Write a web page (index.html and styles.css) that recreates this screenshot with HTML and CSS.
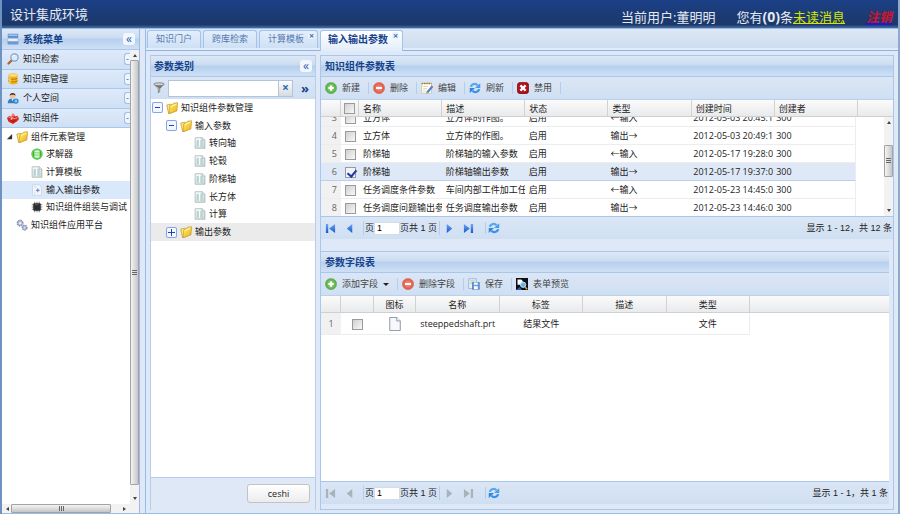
FILE: index.html
```html
<!DOCTYPE html>
<html lang="zh-CN">
<head>
  <meta charset="UTF-8">
  <meta name="viewport" content="width=device-width, initial-scale=1.0">
  <title>设计集成环境</title>
  <link rel="stylesheet" href="styles.css">
</head>
<body>

  <!-- icon sprite -->
  <svg class="sprite" aria-hidden="true">
    <defs>
      <linearGradient id="g-yellow" x1="0" y1="0" x2="1" y2="1"><stop offset="0" stop-color="#fff27a"/><stop offset="1" stop-color="#e8ae10"/></linearGradient>
      <linearGradient id="g-blue" x1="0" y1="0" x2="0" y2="1"><stop offset="0" stop-color="#6aa5f5"/><stop offset="1" stop-color="#1c55d0"/></linearGradient>
      <linearGradient id="g-page" x1="0" y1="0" x2="1" y2="1"><stop offset="0" stop-color="#ffffff"/><stop offset="1" stop-color="#c4d4d4"/></linearGradient>
      <radialGradient id="g-green"><stop offset="0" stop-color="#a8e68c"/><stop offset="1" stop-color="#4fa640"/></radialGradient>
      <radialGradient id="g-red"><stop offset="0" stop-color="#f79a88"/><stop offset="1" stop-color="#e0523f"/></radialGradient>
    </defs>
    <symbol id="i-menu" viewBox="0 0 16 16"><rect x="1" y="1" width="14" height="6" rx="1" fill="#5b8fd2"/><rect x="2" y="2" width="12" height="2" fill="#a5c6ef"/><rect x="1" y="7" width="14" height="8" rx="1" fill="#e6f0fb" stroke="#8fb3dc"/><path d="M1 11h14v4H1z" fill="#6f98cf"/></symbol>
    <symbol id="i-search" viewBox="0 0 16 16"><path d="M6.500 9.500L2 14" stroke="#b5652c" stroke-width="3" stroke-linecap="round"/><circle cx="10" cy="6" r="4.800" fill="#d9ecfc" stroke="#7f9fc8" stroke-width="1.600"/><path d="M7 5q1-2 3-2" stroke="#fff" stroke-width="1.500" fill="none"/></symbol>
    <symbol id="i-db" viewBox="0 0 16 16"><path d="M2 3v10c0 3 12 3 12 0V3z" fill="#f2b41c"/><path d="M2 6.500c0 2.500 12 2.500 12 0M2 10c0 2.500 12 2.500 12 0" fill="none" stroke="#b77707" stroke-width="1.300"/><ellipse cx="8" cy="3.200" rx="6" ry="2.200" fill="#ffe27a" stroke="#d99a12" stroke-width=".6"/><path d="M4 6v8" stroke="#ffe58a" stroke-width="1.500"/></symbol>
    <symbol id="i-user" viewBox="0 0 16 16"><path d="M1 15c0-5 3-6.500 6-6.500s6 1.500 6 6.500z" fill="#3d7fb5"/><circle cx="7.500" cy="5" r="3.700" fill="#f0c49a"/><path d="M3.700 5C3 0 12 0 11.300 5 10 3.500 5.500 3 3.700 5z" fill="#4b3425"/><path d="M6 9l1.500 3L9 9z" fill="#fff"/><circle cx="12" cy="12" r="3.500" fill="#2a8bd8"/><path d="M12 10v4M10.500 12h3" stroke="#d9efff" stroke-width="1"/></symbol>
    <symbol id="i-kit" viewBox="0 0 16 16"><path d="M0 8l3-3 3 1 2-4 3 4 3-1 2 4-2 3-6 4-6-3z" fill="#d8281e"/><path d="M2 7q3-2 6 1t6-1" stroke="#ffb4a8" stroke-width="1.200" fill="none"/><path d="M5 11l3 2 4-3" stroke="#8b0d0a" fill="none"/><circle cx="8" cy="4" r="2" fill="#ef8076"/><circle cx="6" cy="9" r="1.200" fill="#fff" opacity=".8"/></symbol>
    <symbol id="i-folder" viewBox="0 0 16 16"><path d="M1 4l5-1 2 1 .5 10-5 1.500z" fill="#ffe97c" stroke="#b98411" stroke-width=".8"/><path d="M5 5l4-2 1-1.500 5.500-.5-1 11L4 15.500z" fill="url(#g-yellow)" stroke="#c48f14" stroke-width=".8"/><path d="M6.500 6l7.500-3" stroke="#fffbd0" stroke-width="1.200"/></symbol>
    <symbol id="i-solver" viewBox="0 0 16 16"><circle cx="8" cy="8" r="7.500" fill="#39b82d"/><circle cx="8" cy="8" r="6.500" fill="none" stroke="#91e481" stroke-width=".8"/><path d="M4.500 4v8c0 1.500 7 1.500 7 0V4c0-1.500-7-1.500-7 0z" fill="#dcf8d4"/><path d="M4.500 6.500h7M4.500 9.500h7" stroke="#5dc94f"/></symbol>
    <symbol id="i-doc" viewBox="0 0 16 16"><path d="M1.500 1H11l3.500 3v11h-13z" fill="url(#g-page)" stroke="#9db3b3"/><path d="M3.500 4h3v9h-3zM8.500 4h3v9h-3z" fill="#b9d3d3"/><path d="M7.500 2v11" stroke="#fff" stroke-width="1.200"/><path d="M11 1v3h3.500" fill="#fff" stroke="#9db3b3"/></symbol>
    <symbol id="i-param" viewBox="0 0 16 16"><path d="M2 1h9l3 3v11H2z" fill="#f3f6fa" stroke="#c5d1e2"/><path d="M9 6v5M6.500 8.500h5" stroke="#7d86cf" stroke-width="1.500"/><path d="M4 4h3M4 12h2" stroke="#b9cbe5"/></symbol>
    <symbol id="i-chip" viewBox="0 0 16 16"><path d="M5 1v14M8 1v14M11 1v14M1 5h14M1 8h14M1 11h14" stroke="#777" stroke-width="1.200"/><rect x="3" y="3" width="10" height="10" rx="1" fill="#2d2d2d"/><path d="M5 5h5" stroke="#666"/></symbol>
    <symbol id="i-gears" viewBox="0 0 16 16"><g fill="#dfe3f2" stroke="#8b92b8"><circle cx="5.500" cy="5.500" r="3.600" stroke-width="2.200" stroke-dasharray="2 .8"/><circle cx="5.500" cy="5.500" r="2.700"/><circle cx="11.500" cy="11.500" r="3" stroke-width="2" stroke-dasharray="2 .7"/><circle cx="11.500" cy="11.500" r="2"/></g><circle cx="5.500" cy="5.500" r="1" fill="#fff"/></symbol>
    <symbol id="i-filter" viewBox="0 0 16 16"><path d="M1 3l5.500 6v6l3-2V9L15 3z" fill="#777"/><ellipse cx="8" cy="3" rx="7" ry="2" fill="#d2d2d2" stroke="#555" stroke-width=".8"/><path d="M5 6l3 3v4" stroke="#ddd" fill="none"/></symbol>
    <symbol id="i-add" viewBox="0 0 16 16"><circle cx="8" cy="8" r="7.500" fill="url(#g-green)" stroke="#6fae62" stroke-width=".8"/><path d="M8 4.500v7M4.500 8h7" stroke="#fff" stroke-width="2.800"/></symbol>
    <symbol id="i-del" viewBox="0 0 16 16"><circle cx="8" cy="8" r="7.500" fill="url(#g-red)" stroke="#d67565" stroke-width=".8"/><path d="M4 8h8" stroke="#fff" stroke-width="2.800"/></symbol>
    <symbol id="i-edit" viewBox="0 0 16 16"><path d="M1 2h13v13H1z" fill="#fff" stroke="#c8bda0"/><path d="M1 2h13" stroke="#a2792f" stroke-width="2" stroke-dasharray="2 1"/><path d="M3 6h6M3 9h5M3 12h3" stroke="#d9bd73"/><path d="M7.500 12.500L13 6l2.300 2-5.500 6.500-3 .8z" fill="#4488e0"/><path d="M13 6l1.200-1.400 2 2L15.300 8z" fill="#e4402c"/><path d="M7.500 12.500l2.300 2-3 .8z" fill="#f1b44e"/></symbol>
    <symbol id="i-refresh" viewBox="0 0 16 16"><path d="M2.500 6.500C3.500 2 9 1.500 11.500 4.500" fill="none" stroke="#58a6ee" stroke-width="3"/><path d="M15 1.500V8H8z" fill="#4a9bea"/><path d="M13.500 9.500C12.500 14 7 14.500 4.500 11.500" fill="none" stroke="#3b92e8" stroke-width="3"/><path d="M1 14.500V8h7z" fill="#2f86de"/></symbol>
    <symbol id="i-ban" viewBox="0 0 16 16"><rect x=".5" y=".5" width="15" height="15" rx="4" fill="#b3101a" stroke="#6f0b10"/><path d="M4.500 4.500l7 7M11.500 4.500l-7 7" stroke="#fff" stroke-width="3"/></symbol>
    <symbol id="i-save" viewBox="0 0 16 16"><path d="M1 1h10v13H1z" fill="#e7f1fb" stroke="#88a9d3"/><path d="M3 4h6M3 7h3" stroke="#8fbf72"/><path d="M6 6h9v9H6z" fill="#6c9ddd" stroke="#4677bb"/><path d="M8 6h5v3H8zM8 11h5v4H8z" fill="#fff"/></symbol>
    <symbol id="i-preview" viewBox="0 0 16 16"><path d="M0 0h16v16H0z" fill="#0b0f18"/><path d="M2 2h5l2 2v5H2z" fill="#fff"/><circle cx="9.500" cy="9" r="3.600" fill="#5db6f2" stroke="#e3f4ff"/><path d="M0 16l5-4 3 4z" fill="#2e5f9c"/><path d="M12 12l3 3" stroke="#e3a32c" stroke-width="2"/></symbol>
    <symbol id="i-file" viewBox="0 0 16 16"><path d="M2 .5h8l4 4v11H2z" fill="#f6f8fb" stroke="#7d8a9d"/><path d="M10 .5v4h4" fill="#fff" stroke="#7d8a9d"/></symbol>
    <symbol id="i-first" viewBox="0 0 12 12"><path d="M1 1h2.500v10H1zM11 1v10L4.500 6z"/></symbol>
    <symbol id="i-prev" viewBox="0 0 12 12"><path d="M9 1v10L3 6z"/></symbol>
    <symbol id="i-next" viewBox="0 0 12 12"><path d="M3 1v10l6-5z"/></symbol>
    <symbol id="i-last" viewBox="0 0 12 12"><path d="M8.500 1H11v10H8.500zM1 1v10l6.500-5z"/></symbol>
    <symbol id="i-open" viewBox="0 0 8 8"><path d="M7 1v6H1z" fill="#333"/></symbol>
    <symbol id="i-minus" viewBox="0 0 11 11"><path d="M3 5h5v1H3z" fill="#1f45b5"/></symbol>
    <symbol id="i-plus" viewBox="0 0 11 11"><path d="M2 5h7v1H2zM5 2h1v7H5z" fill="#1f45b5"/></symbol>
  </svg>

  <header class="banner">
    <h1>设计集成环境</h1>
    <div class="user">
      <span>当前用户:董明明</span>
      <span class="messages">您有<b>(0)</b>条<a class="unread" href="#messages">未读消息</a></span>
      <a class="logout" href="#logout">注销</a>
    </div>
  </header>

  <div class="viewport">

    <nav class="sidebar">
      <div class="panel-title sidebar-title">
        <svg class="icon"><use href="#i-menu"/></svg>
        <h2>系统菜单</h2>
        <button class="tool" type="button" aria-label="收起菜单">«</button>
      </div>
      <div class="scroll-box">
        <div class="sidebar-body">
          <div class="accordion">
            <button type="button"><svg class="icon"><use href="#i-search"/></svg>知识检索<i>-</i></button>
            <button type="button"><svg class="icon"><use href="#i-db"/></svg>知识库管理<i>-</i></button>
            <button type="button"><svg class="icon"><use href="#i-user"/></svg>个人空间<i>-</i></button>
            <button type="button"><svg class="icon"><use href="#i-kit"/></svg>知识组件<i>-</i></button>
          </div>
          <ul class="menu-tree">
            <li><svg class="arrow"><use href="#i-open"/></svg><svg class="icon"><use href="#i-folder"/></svg>组件元素管理</li>
            <li class="leaf"><svg class="icon"><use href="#i-solver"/></svg>求解器</li>
            <li class="leaf"><svg class="icon"><use href="#i-doc"/></svg>计算模板</li>
            <li class="leaf selected"><svg class="icon"><use href="#i-param"/></svg>输入输出参数</li>
            <li class="leaf"><svg class="icon"><use href="#i-chip"/></svg>知识组件组装与调试</li>
            <li class="root"><svg class="icon"><use href="#i-gears"/></svg>知识组件应用平台</li>
          </ul>
          <div class="hscroll" aria-hidden="true"><i class="left"></i><span class="thumb"></span><i class="right"></i></div>
        </div>
        <div class="vscroll menu-scroll" aria-hidden="true"><i class="up"></i><span class="thumb"></span><i class="down"></i></div>
      </div>
    </nav>

    <main class="main">
      <div class="tabs">
        <button class="tab" type="button">知识门户</button>
        <button class="tab" type="button">跨库检索</button>
        <button class="tab closable" type="button">计算模板<i>×</i></button>
        <button class="tab closable active" type="button">输入输出参数<i>×</i></button>
      </div>

      <div class="workspace">

        <section class="category">
          <div class="panel-title">
            <h2>参数类别</h2>
            <button class="tool" type="button" aria-label="收起">«</button>
          </div>
          <div class="filter">
            <svg class="icon"><use href="#i-filter"/></svg>
            <input type="text" aria-label="过滤参数">
            <button class="clear" type="button" aria-label="清除">×</button>
            <button class="more" type="button" aria-label="更多">»</button>
          </div>
          <div class="category-body">
            <ul class="param-tree">
              <li><button class="toggle" type="button" aria-label="折叠"><svg><use href="#i-minus"/></svg></button><svg class="icon"><use href="#i-folder"/></svg>知识组件参数管理</li>
              <li class="level-1"><button class="toggle" type="button" aria-label="折叠"><svg><use href="#i-minus"/></svg></button><svg class="icon"><use href="#i-folder"/></svg>输入参数</li>
              <li class="level-2"><svg class="icon"><use href="#i-doc"/></svg>转向轴</li>
              <li class="level-2"><svg class="icon"><use href="#i-doc"/></svg>轮毂</li>
              <li class="level-2"><svg class="icon"><use href="#i-doc"/></svg>阶梯轴</li>
              <li class="level-2"><svg class="icon"><use href="#i-doc"/></svg>长方体</li>
              <li class="level-2"><svg class="icon"><use href="#i-doc"/></svg>计算</li>
              <li class="level-1 over"><button class="toggle" type="button" aria-label="展开"><svg><use href="#i-plus"/></svg></button><svg class="icon"><use href="#i-folder"/></svg>输出参数</li>
            </ul>
          </div>
          <div class="category-footer">
            <button type="button">ceshi</button>
          </div>
        </section>

        <div class="grids">

          <section class="grid-panel">
            <div class="panel-title"><h2>知识组件参数表</h2></div>
            <div class="toolbar">
              <button type="button"><svg class="icon"><use href="#i-add"/></svg>新建</button>
              <button type="button"><svg class="icon"><use href="#i-del"/></svg>删除</button>
              <button type="button"><svg class="icon"><use href="#i-edit"/></svg>编辑</button>
              <button type="button"><svg class="icon"><use href="#i-refresh"/></svg>刷新</button>
              <button type="button"><svg class="icon"><use href="#i-ban"/></svg>禁用</button>
            </div>
            <div class="grid-head">
              <table class="params">
                <colgroup><col class="c-num"><col class="c-check"><col class="c-data" span="6"></colgroup>
                <thead>
                  <tr>
                    <th></th>
                    <th class="check"><input type="checkbox" aria-label="全选"></th>
                    <th>名称</th><th>描述</th><th>状态</th><th>类型</th><th>创建时间</th><th>创建者</th>
                  </tr>
                </thead>
              </table>
            </div>
            <div class="grid-body">
              <div class="rows">
                <table class="params">
                  <colgroup><col class="c-num"><col class="c-check"><col class="c-data" span="6"></colgroup>
                  <tbody>
                    <tr><td class="num">3</td><td class="check"><input type="checkbox" aria-label="第3行"></td><td>立方体</td><td>立方体的作图。</td><td>启用</td><td>←输入</td><td>2012-05-03 20:45:12</td><td>300</td></tr>
                    <tr><td class="num">4</td><td class="check"><input type="checkbox" aria-label="第4行"></td><td>立方体</td><td>立方体的作图。</td><td>启用</td><td>输出→</td><td>2012-05-03 20:49:12</td><td>300</td></tr>
                    <tr><td class="num">5</td><td class="check"><input type="checkbox" aria-label="第5行"></td><td>阶梯轴</td><td>阶梯轴的输入参数</td><td>启用</td><td>←输入</td><td>2012-05-17 19:28:01</td><td>300</td></tr>
                    <tr class="selected"><td class="num">6</td><td class="check"><input type="checkbox" aria-label="第6行" checked></td><td>阶梯轴</td><td>阶梯轴输出参数</td><td>启用</td><td>输出→</td><td>2012-05-17 19:37:01</td><td>300</td></tr>
                    <tr><td class="num">7</td><td class="check"><input type="checkbox" aria-label="第7行"></td><td>任务调度条件参数</td><td>车间内部工件加工任务</td><td>启用</td><td>←输入</td><td>2012-05-23 14:45:01</td><td>300</td></tr>
                    <tr><td class="num">8</td><td class="check"><input type="checkbox" aria-label="第8行"></td><td>任务调度问题输出参数</td><td>任务调度输出参数</td><td>启用</td><td>输出→</td><td>2012-05-23 14:46:01</td><td>300</td></tr>
                  </tbody>
                </table>
              </div>
              <div class="vscroll grid-scroll" aria-hidden="true"><i class="up"></i><span class="thumb"></span><i class="down"></i></div>
            </div>
            <div class="paging">
              <button type="button" aria-label="第一页"><svg><use href="#i-first"/></svg></button>
              <button type="button" aria-label="上一页"><svg><use href="#i-prev"/></svg></button>
              <label class="page-no">页<input type="text" value="1"></label>
              <span class="page-total">页共 1 页</span>
              <button type="button" aria-label="下一页"><svg><use href="#i-next"/></svg></button>
              <button type="button" aria-label="最后页"><svg><use href="#i-last"/></svg></button>
              <button class="reload" type="button" aria-label="刷新"><svg><use href="#i-refresh"/></svg></button>
              <span class="summary">显示 1 - 12，共 12 条</span>
            </div>
          </section>

          <section class="grid-panel fields-panel">
            <div class="panel-title"><h2>参数字段表</h2></div>
            <div class="toolbar">
              <button type="button"><svg class="icon"><use href="#i-add"/></svg>添加字段<i class="caret"></i></button>
              <button type="button"><svg class="icon"><use href="#i-del"/></svg>删除字段</button>
              <button type="button"><svg class="icon"><use href="#i-save"/></svg>保存</button>
              <button type="button"><svg class="icon"><use href="#i-preview"/></svg>表单预览</button>
            </div>
            <div class="fields-body">
              <div class="grid-head">
                <table class="fields">
                  <colgroup><col class="c-num"><col class="c-pick"><col class="c-icon"><col class="c-data" span="4"></colgroup>
                  <thead>
                    <tr><th></th><th></th><th>图标</th><th>名称</th><th>标签</th><th>描述</th><th>类型</th></tr>
                  </thead>
                </table>
              </div>
              <table class="fields">
                <colgroup><col class="c-num"><col class="c-pick"><col class="c-icon"><col class="c-data" span="4"></colgroup>
                <tbody>
                  <tr><td class="num">1</td><td class="check"><input type="checkbox" aria-label="第1行"></td><td><svg class="file"><use href="#i-file"/></svg></td><td>steeppedshaft.prt</td><td>结果文件</td><td></td><td>文件</td></tr>
                </tbody>
              </table>
            </div>
            <div class="paging">
              <button type="button" aria-label="第一页" disabled><svg><use href="#i-first"/></svg></button>
              <button type="button" aria-label="上一页" disabled><svg><use href="#i-prev"/></svg></button>
              <label class="page-no">页<input type="text" value="1"></label>
              <span class="page-total">页共 1 页</span>
              <button type="button" aria-label="下一页" disabled><svg><use href="#i-next"/></svg></button>
              <button type="button" aria-label="最后页" disabled><svg><use href="#i-last"/></svg></button>
              <button class="reload" type="button" aria-label="刷新"><svg><use href="#i-refresh"/></svg></button>
              <span class="summary">显示 1 - 1，共 1 条</span>
            </div>
          </section>

        </div>
      </div>
    </main>
  </div>

</body>
</html>
```
FILE: styles.css
```css
* {
  box-sizing: border-box;
}

body {
  margin: 0;
  height: 100vh;
  display: flex;
  flex-direction: column;
  overflow: hidden;
  border-left: 2px solid #6f93c0;
  border-right: 2px solid #8fa9cd;
  background: #dfe8f6;
  color: #222;
  font: 9px/14px "Open Sans", "Noto Sans CJK SC", sans-serif;
}

h1, h2, ul {
  margin: 0;
  padding: 0;
  list-style: none;
}

button {
  margin: 0;
  padding: 0;
  border: 0;
  background: none;
  color: inherit;
  font: inherit;
  cursor: pointer;
}

i {
  font-style: normal;
}

.sprite {
  position: absolute;
  width: 0;
  height: 0;
}

.icon {
  width: 12px;
  height: 12px;
  flex: none;
}

/* banner */

.banner {
  height: 28px;
  flex: none;
  display: flex;
  justify-content: space-between;
  padding: 0 6px 0 8px;
  background: linear-gradient(#1c4088, #1b3868 88%, #4a6fa5);
  color: #e4e9f2;
  font-size: 13px;
  line-height: 28px;
}

.banner h1 {
  font-size: 13px;
  font-weight: normal;
}

.user {
  display: flex;
  gap: 21px;
  padding-top: 4px;
  line-height: 26px;
  white-space: nowrap;
}

.messages b {
  font-size: 14px;
}

.unread {
  color: #d6e600;
}

.logout {
  color: #d3122c;
  font-weight: bold;
  font-style: italic;
  text-decoration-color: #1818e0;
  text-decoration-thickness: 2px;
}

/* shared panel pieces */

.viewport {
  flex: 1;
  min-height: 0;
  display: flex;
  gap: 5px;
  border-top: 1px solid #99bbe8;
  border-bottom: 1px solid #99bbe8;
}

.panel-title {
  height: 22px;
  flex: none;
  display: flex;
  align-items: center;
  gap: 4px;
  padding: 0 4px;
  border: 1px solid #a9c6ec;
  border-width: 1px 0;
  background: linear-gradient(#dde8f6, #cbdcf0 45%, #b5cfee 50%, #cfe0f5);
  color: #15428b;
}

.panel-title h2 {
  flex: 1;
  font-size: 10px;
  line-height: 14px;
}

.tool {
  width: 12px;
  height: 12px;
  border-radius: 3px;
  background: #f1f7fe;
  color: #2f5fa8;
  font-size: 12px;
  line-height: 10px;
}

/* sidebar */

.sidebar {
  width: 138px;
  flex: none;
  display: flex;
  flex-direction: column;
  border-right: 1px solid #99bbe8;
  background: #fff;
}

.sidebar-title {
  height: 21px;
  padding-left: 5px;
  border-top: 0;
}

.scroll-box {
  flex: 1;
  min-height: 0;
  display: flex;
}

.sidebar-body {
  flex: 1;
  min-width: 0;
  display: flex;
  flex-direction: column;
  overflow: hidden;
}

.accordion {
  height: 78px;
  display: grid;
  grid-template-rows: repeat(4, 1fr);
}

.accordion button {
  display: flex;
  align-items: center;
  gap: 4px;
  padding-left: 5px;
  border-bottom: 1px solid #a9c6ec;
  background: linear-gradient(#dfeafa, #cfe0f4);
}

.accordion i {
  width: 6px;
  height: 12px;
  margin-left: auto;
  border: 1px solid #9fc0ea;
  border-right: 0;
  border-radius: 3px 0 0 3px;
  background: #eef5fd;
  color: #3c6dad;
  line-height: 9px;
}

.menu-tree {
  height: 106px;
  display: grid;
  grid-template-rows: repeat(6, 1fr);
}

.menu-tree li, .param-tree li {
  display: flex;
  align-items: center;
  gap: 3px;
  white-space: nowrap;
}

.menu-tree li {
  padding-left: 4px;
}

.menu-tree .root {
  padding-left: 14px;
}

.menu-tree .leaf {
  padding-left: 29px;
}

.menu-tree .selected {
  background: #d9e8fb;
}

.arrow {
  width: 7px;
  height: 7px;
}

/* scrollbars */

.vscroll, .hscroll {
  display: flex;
  align-items: center;
  justify-content: space-between;
  background: #f2f2f2;
}

.vscroll {
  width: 9px;
  flex: none;
  flex-direction: column;
  padding: 4px 0;
}

.hscroll {
  height: 9px;
  margin-top: auto;
  padding: 0 4px;
}

.thumb {
  display: flex;
  align-items: center;
  justify-content: center;
  border: 1px solid #a3a3a3;
  border-radius: 1px;
}

.thumb::after {
  content: "";
  width: 5px;
  height: 5px;
  background: repeating-linear-gradient(#666 0 1px, transparent 1px 2px);
}

.vscroll .thumb {
  width: 9px;
  background: linear-gradient(90deg, #f4f4f4, #c6c6c6);
}

.hscroll .thumb {
  flex: 1;
  height: 9px;
  margin: 0 12px 0 2px;
  background: linear-gradient(#f4f4f4, #c6c6c6);
}

.hscroll .thumb::after {
  background: repeating-linear-gradient(90deg, #666 0 1px, transparent 1px 2px);
}

.menu-scroll {
  padding-bottom: 13px;
}

.menu-scroll .thumb {
  flex: 1;
  margin: 3px 0 12px;
}

.grid-scroll .thumb {
  height: 32px;
  margin-bottom: 12px;
}

.up, .down, .left, .right {
  border: 2px solid transparent;
}

.up {
  border-top: 0;
  border-bottom: 3px solid #444;
}

.down {
  border-bottom: 0;
  border-top: 3px solid #444;
}

.left {
  border-left: 0;
  border-right: 3px solid #444;
}

.right {
  border-right: 0;
  border-left: 3px solid #444;
}

/* tabs */

.main {
  flex: 1;
  min-width: 0;
  display: flex;
  flex-direction: column;
  border-left: 1px solid #99bbe8;
}

.tabs {
  height: 22px;
  flex: none;
  display: flex;
  gap: 2px;
  padding: 1px 0 0 1px;
  border-bottom: 1px solid #8db2e3;
  box-shadow: inset 0 -2px #e2edfb;
  background: linear-gradient(#dde8f5, #cbdbef);
}

.tab {
  height: 18px;
  display: flex;
  gap: 4px;
  padding: 1px 8px;
  border: 1px solid #a3c2ec;
  border-bottom: 0;
  border-radius: 3px 3px 0 0;
  background: linear-gradient(#e3eefb, #cfe0f5);
  color: #5277ae;
  white-space: nowrap;
}

.tab.closable {
  padding-right: 2px;
}

.tab i {
  width: 7px;
  height: 7px;
  border-radius: 2px;
  background: #e9f2fd;
  color: #456fa8;
  font-size: 9px;
  font-weight: bold;
  line-height: 7px;
}

.tab.active {
  height: 21px;
  padding: 1px 3px 1px 7px;
  background: linear-gradient(#fff, #e2edfb);
  color: #15428b;
  font-size: 10px;
  font-weight: bold;
}

.workspace {
  flex: 1;
  min-height: 0;
  display: flex;
  gap: 4px;
  padding: 4px 4px 3px;
}

/* category tree */

.category {
  width: 166px;
  flex: none;
  display: flex;
  flex-direction: column;
  border: 1px solid #b5cdee;
  border-width: 0 1px;
}

.category .panel-title {
  padding: 0 3px;
}

.filter {
  height: 22px;
  flex: none;
  display: flex;
  align-items: center;
  padding: 0 6px 0 2px;
  background: linear-gradient(#dbe6f5, #cfdff2);
}

.filter input {
  flex: 1;
  min-width: 0;
  height: 17px;
  margin-left: 3px;
  border: 1px solid #b3c4da;
  background: #fff;
}

.filter .clear {
  width: 14px;
  height: 17px;
  border: 1px solid #b3c4da;
  border-left: 0;
  background: linear-gradient(#fdfdfd, #d5dbe3);
  color: #2b6cb0;
  font-size: 12px;
  font-weight: bold;
}

.filter .more {
  margin-left: 8px;
  color: #15428b;
  font-size: 13px;
  font-weight: bold;
}

.category-body {
  flex: 1;
  background: #fff;
}

.param-tree {
  height: 142px;
  display: grid;
  grid-template-rows: repeat(8, 1fr);
}

.param-tree li {
  padding-left: 1px;
}

.param-tree .level-1 {
  padding-left: 15px;
}

.param-tree .level-2 {
  padding-left: 43px;
}

.param-tree .over {
  background: #ebebeb;
}

.toggle {
  width: 11px;
  height: 11px;
  border-radius: 2px;
  box-shadow: inset 0 0 0 1px #86a3e6;
  background: #f2f6ff;
  line-height: 0;
}

.toggle svg {
  width: 11px;
  height: 11px;
}

.category-footer {
  height: 33px;
  flex: none;
  padding: 6px 5px;
  border-top: 1px solid #b5cdee;
  text-align: right;
}

.category-footer button {
  width: 63px;
  height: 19px;
  border: 1px solid #c3c3c3;
  border-radius: 3px;
  background: linear-gradient(#fff, #ececec);
}

/* grids */

.grids {
  flex: 1;
  min-width: 0;
  display: flex;
  flex-direction: column;
  gap: 12px;
  border: 1px solid #a9c6ec;
  border-top: 0;
  padding-bottom: 5px;
}

.grid-panel {
  display: flex;
  flex-direction: column;
}

.fields-panel {
  flex: 1;
  min-height: 0;
  margin-right: 4px;
}

.toolbar {
  height: 23px;
  flex: none;
  display: flex;
  align-items: center;
  padding-left: 4px;
  border-bottom: 1px solid #b9d0ee;
  background: linear-gradient(#dbe6f5, #cfdff2);
  color: #444;
}

.toolbar button {
  display: flex;
  align-items: center;
  gap: 5px;
  margin-right: 4px;
  padding-right: 8px;
  border-right: 1px solid #b4cdee;
  line-height: 12px;
}

.fields-panel .toolbar button:last-child {
  border-right: 0;
}

.caret {
  border: 3px solid transparent;
  border-top-color: #222;
  border-bottom: 0;
}

table {
  border-collapse: separate;
  border-spacing: 0;
  table-layout: fixed;
}

.params {
  width: 537px;
}

.fields {
  width: 429px;
}

.c-num {
  width: 20px;
}

.c-check {
  width: 18px;
}

.c-pick {
  width: 33px;
}

.c-icon {
  width: 42px;
}

.grid-head {
  flex: none;
  border-bottom: 1px solid #d0d0d0;
  background: linear-gradient(#fbfbfb, #e9eaec);
}

th {
  height: 16px;
  padding: 1px 4px 0;
  border-right: 1px solid #d2d2d2;
  font-weight: normal;
  text-align: left;
}

td {
  height: 18px;
  padding: 1px 2px 0 4px;
  border-bottom: 1px solid #ededed;
  overflow: hidden;
  white-space: nowrap;
}

td:last-child {
  border-right: 1px solid #ededed;
}

td:nth-child(n+6) {
  padding-left: 3px;
}

th.check, td.check {
  padding: 0;
  text-align: center;
}

td.num {
  padding-right: 4px;
  background: #f1f1f1;
  color: #666;
  text-align: right;
}

tr.selected td {
  border-bottom-color: #b9cfee;
  background: #dfe8f6;
}

input[type="checkbox"] {
  appearance: none;
  width: 11px;
  height: 11px;
  margin: 0;
  border: 1px solid #9a9a9a;
  background: linear-gradient(135deg, #d0d0d0, #f8f8f8);
  vertical-align: middle;
}

input[type="checkbox"]:checked {
  background: #eef2fa;
}

input[type="checkbox"]:checked::before {
  content: "";
  display: block;
  width: 4px;
  height: 7px;
  margin-left: 3px;
  border: solid #21379c;
  border-width: 0 2px 2px 0;
  transform: rotate(40deg);
}

.grid-body {
  height: 99px;
  display: flex;
  background: #fff;
}

/* the list is scrolled, so its first visible row is cut */
.rows {
  flex: 1;
  min-width: 0;
  display: flex;
  flex-direction: column;
  justify-content: flex-end;
  overflow: hidden;
}

.rows .params {
  width: 535px;
  margin-bottom: -1px;
}

.fields-body {
  flex: 1;
  min-height: 0;
  background: #fff;
}

.fields th, .fields td {
  padding: 1px 0 0;
  text-align: center;
}

.fields td {
  height: 22px;
}

.file {
  width: 14px;
  height: 14px;
  vertical-align: middle;
}

/* paging */

.paging {
  height: 23px;
  flex: none;
  display: flex;
  align-items: center;
  padding: 0 1px 0 4px;
  border-top: 1px solid #a9c6ec;
  background: linear-gradient(#dbe6f5, #cfdff2);
  font-family: "Liberation Sans", "Noto Sans CJK SC", sans-serif;
}

.paging button {
  height: 12px;
  margin-right: 8px;
  line-height: 0;
  fill: url(#g-blue);
}

.paging button:disabled {
  fill: #a9b1bb;
}

.paging svg {
  width: 11px;
  height: 11px;
}

.page-no {
  display: flex;
  align-items: center;
  padding-left: 1px;
  border-left: 1px solid #b4cdee;
}

.page-no input {
  width: 26px;
  height: 13px;
  padding: 0 2px;
  border: 1px solid #d3dce8;
  background: #fff;
  font: inherit;
}

.page-total {
  margin-right: 4px;
  padding-right: 2px;
  border-right: 1px solid #b4cdee;
}

.paging .reload {
  margin-left: 3px;
  padding-left: 2px;
  border-left: 1px solid #b4cdee;
}

.paging .reload svg {
  width: 12px;
  height: 12px;
}

.summary {
  margin-left: auto;
}
```
